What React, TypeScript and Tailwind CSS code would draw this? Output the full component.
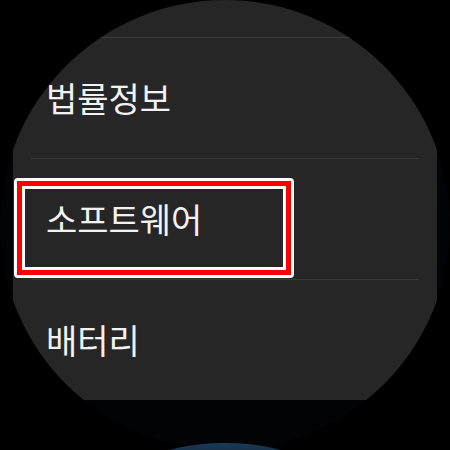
export default function App() {
  const rows = ["법률정보", "소프트웨어", "배터리"];

  return (
    <div className="relative w-[450px] h-[450px] overflow-hidden bg-black">
      {/* round watch screen */}
      <div className="w-[450px] h-[450px] rounded-full overflow-hidden bg-[#020305]">
        <div className="mx-[13px] h-[400px] bg-[#262626] flex flex-col font-['Noto_Sans_CJK_KR','Noto_Sans',sans-serif]">
          <div className="h-[37px] shrink-0" />
          {rows.map((label, i) => (
            <div key={label} className="flex flex-col">
              <div className="h-px mx-[18px] bg-[#3a3a3a]" />
              <div className="relative h-[120px] flex items-center pl-[33px]">
                <span className="text-[34px] leading-none text-[#f2f2f2]">
                  {label}
                </span>
                {i === 1 && (
                  <div className="absolute left-[1px] top-[19px] w-[280px] h-[100px] rounded-[4px] border-[3px] border-white">
                    <div className="w-full h-full border-[5px] border-[#ff0000]">
                      <div className="w-full h-full border-[3px] border-white" />
                    </div>
                  </div>
                )}
              </div>
            </div>
          ))}
        </div>
      </div>

      {/* bottom scroll indicator glow */}
      <div className="absolute left-[160px] top-[443px] w-[130px] h-[30px] rounded-[50%] bg-gradient-to-b from-[#1c3a57] to-[#0a1620]" />
    </div>
  );
}
